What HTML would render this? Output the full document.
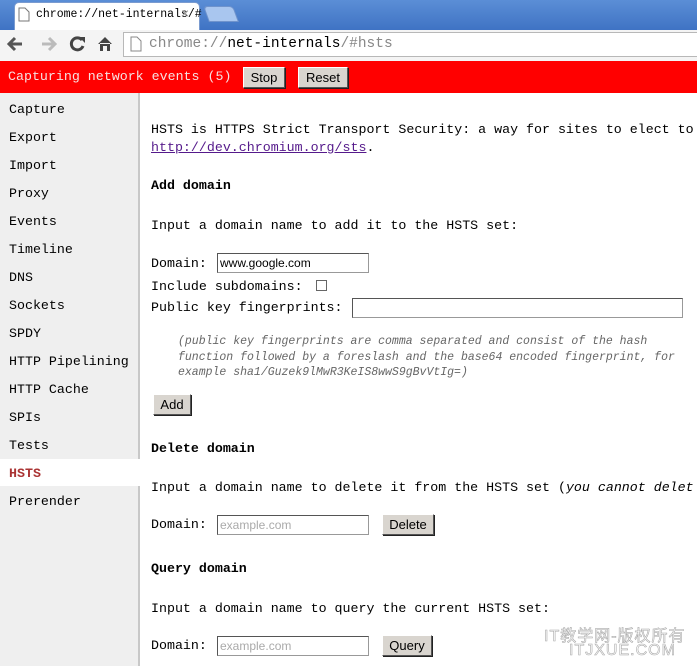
<!DOCTYPE html>
<html><head><style>
*{margin:0;padding:0;box-sizing:border-box}
body{width:697px;height:666px;overflow:hidden;position:relative;background:#fff;font-family:"Liberation Mono","Noto Sans CJK SC",monospace;font-size:13.3px;color:#000}
.a{position:absolute;white-space:nowrap}
.tabbar{position:absolute;left:0;top:0;width:697px;height:30px;background:linear-gradient(#5b8ed6,#3f73c4)}
.tab{position:absolute;left:14px;top:2px;width:186px;height:28px;background:#fff;border-radius:5px 5px 0 0;border:1px solid #7a9bd0;border-bottom:none}
.tab2{position:absolute;left:206px;top:6px;width:30px;height:16px;background:#a9c6ef;border-radius:4px 4px 0 0;border:1px solid #6f93cc;transform:skewX(20deg)}
.tool{position:absolute;left:0;top:30px;width:697px;height:31px;background:#f4f4f4}
.omni{position:absolute;left:123px;top:32px;width:580px;height:25px;border:1px solid #b8b8b8;background:#fff}
.red{position:absolute;left:0;top:61px;width:697px;height:32px;background:#ff0000}
.btn{position:absolute;background:#d9d5cf;border:1px solid;border-color:#fff #555 #555 #fff;font-family:"Liberation Sans",sans-serif;font-size:13px;text-align:center;line-height:19px;box-shadow:1px 1px 0 #222}
.side{position:absolute;left:0;top:93px;width:140px;height:573px;background:#efefef;border-right:2px solid #c8c8c8}
.inp{position:absolute;height:20px;border:1px solid #999;border-top-color:#555;border-left-color:#555;background:#fff;font-family:"Liberation Sans",sans-serif;font-size:12px;line-height:18px;padding-left:2px}
b{font-weight:bold}
.it{font-style:italic;color:#666;font-size:11.5px}
</style></head><body>
<div class="tabbar"></div>
<div class="tab"></div><div class="tab2"></div>
<svg class="a" style="left:18px;top:7px" width="12" height="15"><path d="M1 1h6l4 4v9H1z" fill="#fff" stroke="#777"/></svg>
<div class="a" style="left:36px;top:8px;font-size:11.5px">chrome://net-internals/#</div>
<div class="a" style="left:181px;top:5px;color:#999;font-family:'Liberation Sans';font-size:14px">×</div>
<div class="tool"></div>
<svg class="a" style="left:6px;top:34px" width="115" height="20">
<path d="M16 10H4M9 4L3 10l6 6" stroke="#555" stroke-width="3" fill="none"/>
<path d="M36 10h12M43 4l6 6-6 6" stroke="#bbb" stroke-width="3" fill="none"/>
<path d="M76 6a6 6 0 1 0 1 6" stroke="#444" stroke-width="3" fill="none"/><path d="M73 3l6 0 0 6z" fill="#444"/>
<path d="M92 10l7-7 7 7M94 9v8h3v-5h4v5h3v-8" fill="#444"/>
</svg>
<div class="omni"></div>
<svg class="a" style="left:130px;top:36px" width="12" height="16"><path d="M1 1h6l4 4v10H1z" fill="#fff" stroke="#888"/></svg>
<div class="a" style="left:149px;top:36px;font-size:14.5px;color:#888">chrome://<span style="color:#000">net-internals</span>/#hsts</div>
<div class="red"></div>
<div class="a" style="left:8px;top:69px;color:#f6e0e0">Capturing network events (5)</div>
<div class="btn" style="left:243px;top:67px;width:42px;height:21px">Stop</div>
<div class="btn" style="left:298px;top:67px;width:50px;height:21px">Reset</div>
<div class="side"></div>
<div class="a" style="left:0;top:459px;width:140px;height:27px;background:#fff"></div>
<div class="a" style="left:9px;top:96px;line-height:28px">Capture<br>Export<br>Import<br>Proxy<br>Events<br>Timeline<br>DNS<br>Sockets<br>SPDY<br>HTTP Pipelining<br>HTTP Cache<br>SPIs<br>Tests<br><b style="color:#a33">HSTS</b><br>Prerender</div>
<div class="a" style="left:151px;top:121px;line-height:18px">HSTS is HTTPS Strict Transport Security: a way for sites to elect to<br><span style="color:#551a8b;text-decoration:underline">http://dev.chromium.org/sts</span>.</div>
<div class="a" style="left:151px;top:178px"><b>Add domain</b></div>
<div class="a" style="left:151px;top:218px">Input a domain name to add it to the HSTS set:</div>
<div class="a" style="left:151px;top:256px">Domain:</div>
<div class="inp" style="left:217px;top:253px;width:152px">www.google.com</div>
<div class="a" style="left:151px;top:279px">Include subdomains:</div>
<div class="a" style="left:316px;top:280px;width:11px;height:11px;border:1px solid #666;background:#fff"></div>
<div class="a" style="left:151px;top:300px">Public key fingerprints:</div>
<div class="inp" style="left:352px;top:298px;width:331px"></div>
<div class="a it" style="left:178px;top:334px;line-height:15.5px">(public key fingerprints are comma separated and consist of the hash<br>function followed by a foreslash and the base64 encoded fingerprint, for<br>example sha1/Guzek9lMwR3KeIS8wwS9gBvVtIg=)</div>
<div class="btn" style="left:153px;top:394px;width:38px;height:21px">Add</div>
<div class="a" style="left:151px;top:441px"><b>Delete domain</b></div>
<div class="a" style="left:151px;top:480px">Input a domain name to delete it from the HSTS set (<i>you cannot delet</i></div>
<div class="a" style="left:151px;top:517px">Domain:</div>
<div class="inp" style="left:217px;top:515px;width:152px;color:#aaa">example.com</div>
<div class="btn" style="left:382px;top:514px;width:52px;height:21px">Delete</div>
<div class="a" style="left:151px;top:561px"><b>Query domain</b></div>
<div class="a" style="left:151px;top:601px">Input a domain name to query the current HSTS set:</div>
<div class="a" style="left:151px;top:638px">Domain:</div>
<div class="inp" style="left:217px;top:636px;width:152px;color:#aaa">example.com</div>
<div class="btn" style="left:382px;top:635px;width:50px;height:21px">Query</div>
<div class="a" style="left:544px;top:622px;font-family:'Liberation Sans','Noto Sans CJK SC',sans-serif;font-size:16px;color:#fff;-webkit-text-stroke:0.6px #aaa;letter-spacing:1px">IT教学网-版权所有</div>
<div class="a" style="left:569px;top:642px;font-family:'Liberation Sans',sans-serif;font-size:16px;color:#fff;-webkit-text-stroke:0.6px #aaa;letter-spacing:1px">ITJXUE.COM</div>
</body></html>
